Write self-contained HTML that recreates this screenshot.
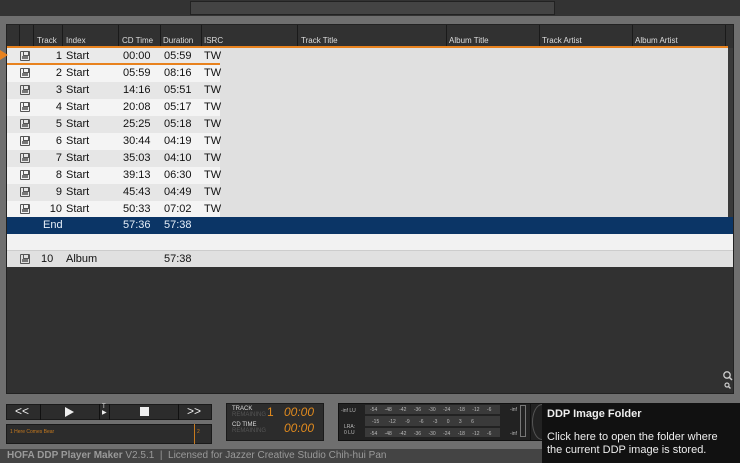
<!DOCTYPE html>
<html><head><style>
*{margin:0;padding:0;box-sizing:border-box}
body{width:740px;height:463px;background:#6f6f6f;position:relative;overflow:hidden;font-family:"Liberation Sans",sans-serif}
.a{position:absolute}
.hd{font-size:8px;line-height:8px;color:#ddd;top:37px}
.sep{position:absolute;top:25px;height:22px;width:1px;background:#1a1a1a}
.row{position:absolute;left:7px;width:721px;height:17px;background:#e0e0e0;font-size:11px;color:#111}
.row .c{position:absolute;top:2px}
.row .bg{position:absolute;left:0;top:0;width:213px;height:17px}
.fl{position:absolute;left:13px;top:3px;width:10px;height:10px;border:1px solid #555;border-radius:1px}
.fl:before{content:"";position:absolute;left:2px;top:0;width:4px;height:3px;border:1px solid #555;border-top:0}
.fl:after{content:"";position:absolute;left:1px;bottom:1px;width:6px;height:3px;background:#777}
.mt{font-size:5px;color:#bbb;position:absolute;letter-spacing:0}
</style></head><body>
<div class="a" style="left:0;top:0;width:740px;height:16px;background:#333"></div>
<div class="a" style="left:190px;top:1px;width:365px;height:14px;background:#444;border:1px solid #222"></div>
<div class="a" style="left:6px;top:24px;width:728px;height:370px;background:#313131;border:1px solid #222"></div>
<div class="sep" style="left:19px"></div><div class="sep" style="left:33px"></div><div class="sep" style="left:62px"></div><div class="sep" style="left:118px"></div><div class="sep" style="left:160px"></div><div class="sep" style="left:201px"></div><div class="sep" style="left:297px"></div><div class="sep" style="left:446px"></div><div class="sep" style="left:539px"></div><div class="sep" style="left:632px"></div><div class="sep" style="left:725px"></div>
<div class="a hd" style="left:37px">Track</div>
<div class="a hd" style="left:66px">Index</div>
<div class="a hd" style="left:122px">CD Time</div>
<div class="a hd" style="left:163px">Duration</div>
<div class="a hd" style="left:204px">ISRC</div>
<div class="a hd" style="left:301px">Track Title</div>
<div class="a hd" style="left:449px">Album Title</div>
<div class="a hd" style="left:542px">Track Artist</div>
<div class="a hd" style="left:635px">Album Artist</div>
<div class="a" style="left:7px;top:46px;width:721px;height:2px;background:#e8821e"></div>
<div class="a" style="left:728px;top:48px;width:5px;height:219px;background:#3a3a3a"></div>

<div class="row" style="top:48px"><div class="bg" style="background:#eaeaea"></div><div class="fl"></div><span class="c" style="right:666px">1</span><span class="c" style="left:59px">Start</span><span class="c" style="left:116px">00:00</span><span class="c" style="left:157px">05:59</span><span class="c" style="left:197px">TW</span></div>
<div class="a" style="left:0;top:50px;width:0;height:0;border-left:8px solid #e8821e;border-top:5px solid transparent;border-bottom:5px solid transparent"></div>
<div class="a" style="left:7px;top:63px;width:213px;height:2px;background:#e8821e"></div>
<div class="row" style="top:65px"><div class="bg" style="background:#f4f4f4"></div><div class="fl"></div><span class="c" style="right:666px">2</span><span class="c" style="left:59px">Start</span><span class="c" style="left:116px">05:59</span><span class="c" style="left:157px">08:16</span><span class="c" style="left:197px">TW</span></div>
<div class="row" style="top:82px"><div class="bg" style="background:#e6e6e6"></div><div class="fl"></div><span class="c" style="right:666px">3</span><span class="c" style="left:59px">Start</span><span class="c" style="left:116px">14:16</span><span class="c" style="left:157px">05:51</span><span class="c" style="left:197px">TW</span></div>
<div class="row" style="top:99px"><div class="bg" style="background:#f4f4f4"></div><div class="fl"></div><span class="c" style="right:666px">4</span><span class="c" style="left:59px">Start</span><span class="c" style="left:116px">20:08</span><span class="c" style="left:157px">05:17</span><span class="c" style="left:197px">TW</span></div>
<div class="row" style="top:116px"><div class="bg" style="background:#e6e6e6"></div><div class="fl"></div><span class="c" style="right:666px">5</span><span class="c" style="left:59px">Start</span><span class="c" style="left:116px">25:25</span><span class="c" style="left:157px">05:18</span><span class="c" style="left:197px">TW</span></div>
<div class="row" style="top:133px"><div class="bg" style="background:#f4f4f4"></div><div class="fl"></div><span class="c" style="right:666px">6</span><span class="c" style="left:59px">Start</span><span class="c" style="left:116px">30:44</span><span class="c" style="left:157px">04:19</span><span class="c" style="left:197px">TW</span></div>
<div class="row" style="top:150px"><div class="bg" style="background:#e6e6e6"></div><div class="fl"></div><span class="c" style="right:666px">7</span><span class="c" style="left:59px">Start</span><span class="c" style="left:116px">35:03</span><span class="c" style="left:157px">04:10</span><span class="c" style="left:197px">TW</span></div>
<div class="row" style="top:167px"><div class="bg" style="background:#f4f4f4"></div><div class="fl"></div><span class="c" style="right:666px">8</span><span class="c" style="left:59px">Start</span><span class="c" style="left:116px">39:13</span><span class="c" style="left:157px">06:30</span><span class="c" style="left:197px">TW</span></div>
<div class="row" style="top:184px"><div class="bg" style="background:#e6e6e6"></div><div class="fl"></div><span class="c" style="right:666px">9</span><span class="c" style="left:59px">Start</span><span class="c" style="left:116px">45:43</span><span class="c" style="left:157px">04:49</span><span class="c" style="left:197px">TW</span></div>
<div class="row" style="top:201px"><div class="bg" style="background:#f4f4f4"></div><div class="fl"></div><span class="c" style="right:666px">10</span><span class="c" style="left:59px">Start</span><span class="c" style="left:116px">50:33</span><span class="c" style="left:157px">07:02</span><span class="c" style="left:197px">TW</span></div>
<div class="row" style="top:217px;height:17px;background:#0b3566;color:#e6eef8;width:726px"><span class="c" style="left:36px">End</span><span class="c" style="left:116px">57:36</span><span class="c" style="left:157px">57:38</span></div>
<div class="row" style="top:234px;background:#f2f2f2;width:726px"></div>
<div class="row" style="top:250px;height:17px;background:#e0e0e0;width:726px;border-top:1px solid #ccc"><div class="fl"></div><span class="c" style="left:34px">10</span><span class="c" style="left:59px">Album</span><span class="c" style="left:157px">57:38</span></div>

<svg class="a" style="left:722px;top:370px" width="12" height="22" viewBox="0 0 12 22"><circle cx="5" cy="5" r="3.2" fill="none" stroke="#ccc" stroke-width="1.3"/><line x1="7.3" y1="7.3" x2="10" y2="10" stroke="#ccc" stroke-width="1.5"/><circle cx="5" cy="15" r="2" fill="none" stroke="#ccc" stroke-width="1.2"/><line x1="6.5" y1="16.5" x2="8.5" y2="18.5" stroke="#ccc" stroke-width="1.3"/></svg>

<div class="a" style="left:6px;top:404px;width:206px;height:16px;background:#2c2c2c;border:1px solid #1a1a1a"></div>
<div class="a" style="left:40px;top:404px;width:1px;height:16px;background:#111"></div>
<div class="a" style="left:99px;top:404px;width:1px;height:16px;background:#111"></div>
<div class="a" style="left:109px;top:404px;width:1px;height:16px;background:#111"></div>
<div class="a" style="left:178px;top:404px;width:1px;height:16px;background:#111"></div>
<div class="a" style="left:15px;top:404px;color:#eee;font-size:12px">&lt;&lt;</div>
<div class="a" style="left:65px;top:407px;border-left:9px solid #eee;border-top:5px solid transparent;border-bottom:5px solid transparent"></div>
<div class="a" style="left:102px;top:404px;color:#eee;font-size:6px;line-height:6px">T<br>&#9654;</div>
<div class="a" style="left:140px;top:407px;width:9px;height:9px;background:#eee"></div>
<div class="a" style="left:187px;top:404px;color:#eee;font-size:12px">&gt;&gt;</div>
<div class="a" style="left:6px;top:424px;width:206px;height:20px;background:#2c2c2c;border:1px solid #1a1a1a"></div>
<div class="a" style="left:10px;top:429px;color:#c77a1e;font-size:5px">1 Here Comes Bear</div>
<div class="a" style="left:194px;top:424px;width:1px;height:20px;background:#c77a1e"></div>
<div class="a" style="left:197px;top:429px;color:#c77a1e;font-size:5px">2</div>

<div class="a" style="left:226px;top:403px;width:98px;height:38px;background:#2c2c2c;border:1px solid #1a1a1a"></div>
<div class="a" style="left:232px;top:406px;color:#ddd;font-size:6px;line-height:6px">TRACK<br><span style="color:#555">REMAINING</span></div>
<div class="a" style="left:267px;top:405px;color:#e08a1e;font-size:12px">1</div>
<div class="a" style="left:284px;top:405px;color:#e08a1e;font-size:12px;font-style:italic">00:00</div>
<div class="a" style="left:232px;top:422px;color:#ddd;font-size:6px;line-height:6px">CD TIME<br><span style="color:#555">REMAINING</span></div>
<div class="a" style="left:284px;top:421px;color:#e08a1e;font-size:12px;font-style:italic">00:00</div>

<div class="a" style="left:338px;top:403px;width:210px;height:38px;background:#222;border:1px solid #111"></div>
<div class="a" style="left:365px;top:405px;width:135px;height:9px;background:#3a3a3a"></div>
<div class="a" style="left:365px;top:416px;width:135px;height:10px;background:#3a3a3a"></div>
<div class="a" style="left:365px;top:428px;width:135px;height:9px;background:#3a3a3a"></div>
<div class="mt" style="left:341px;top:408px">-inf LU</div>
<div class="mt" style="left:344px;top:424px;line-height:6px">LRA:<br>0 LU</div>
<div class="mt" style="left:370px;top:407px;word-spacing:6px">-54 -48 -42 -36 -30 -24 -18 -12 -6</div>
<div class="mt" style="left:372px;top:419px;word-spacing:8px">-15 -12 -9 -6 -3 0 3 6</div>
<div class="mt" style="left:370px;top:431px;word-spacing:6px">-54 -48 -42 -36 -30 -24 -18 -12 -6</div>
<div class="mt" style="left:510px;top:407px">-inf</div>
<div class="mt" style="left:510px;top:431px">-inf</div>
<div class="a" style="left:520px;top:405px;width:6px;height:32px;border:1px solid #777"></div>
<div class="a" style="left:530px;top:403px;width:1px;height:38px;background:#111"></div>
<div class="a" style="left:532px;top:404px;width:20px;height:36px;border-radius:50%;border:1px solid #555"></div>

<div class="a" style="left:0;top:449px;width:740px;height:14px;background:#444"></div>
<div class="a" style="left:7px;top:450px;color:#9a9a9a;font-size:10px;white-space:nowrap"><b>HOFA DDP Player Maker</b> V2.5.1 &nbsp;|&nbsp; Licensed for Jazzer Creative Studio Chih-hui Pan</div>

<div class="a" style="left:542px;top:403px;width:198px;height:60px;background:#111"></div>
<div class="a" style="left:547px;top:408px;color:#eee;font-size:11px;font-weight:bold">DDP Image Folder</div>
<div class="a" style="left:547px;top:431px;color:#eee;font-size:11px;line-height:13px;white-space:nowrap">Click here to open the folder where<br>the current DDP image is stored.</div>
</body></html>
